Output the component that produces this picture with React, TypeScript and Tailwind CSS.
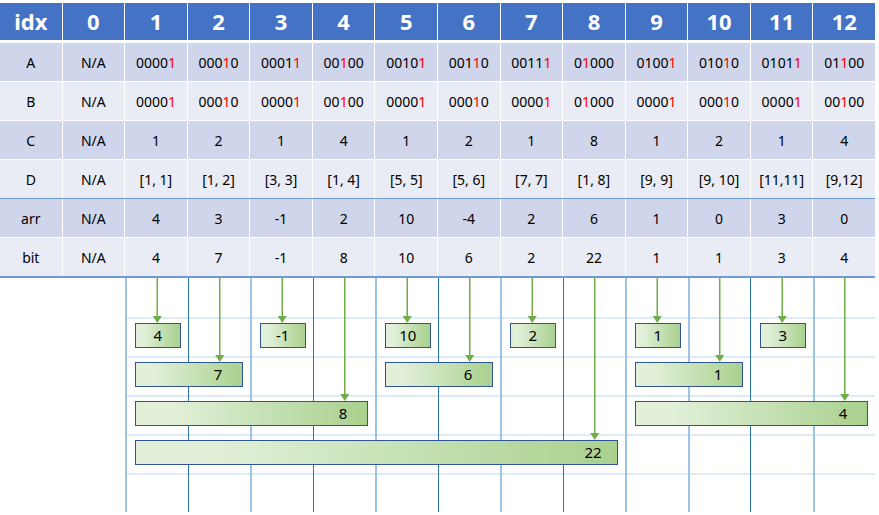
const cols = [1, 2, 3, 4, 5, 6, 7, 8, 9, 10, 11, 12];
const lowbit = (n: number) => n & -n;

const dRow = ['[1, 1]', '[1, 2]', '[3, 3]', '[1, 4]', '[5, 5]', '[5, 6]', '[7, 7]', '[1, 8]', '[9, 9]', '[9, 10]', '[11,11]', '[9,12]'];
const arr = [4, 3, -1, 2, 10, -4, 2, 6, 1, 0, 3, 0];
const bit = [4, 7, -1, 8, 10, 6, 2, 22, 1, 1, 3, 4];

// gridline columns below the table (one per data column), light or dark left border
const lineCols = [
  { pos: 'col-start-3', line: 'border-l-2 border-[#9dc3e6]' },
  { pos: 'col-start-4', line: 'border-l border-[#2e75b6]' },
  { pos: 'col-start-5', line: 'border-l-2 border-[#9dc3e6]' },
  { pos: 'col-start-6', line: 'border-l border-[#2e75b6]' },
  { pos: 'col-start-7', line: 'border-l-2 border-[#9dc3e6]' },
  { pos: 'col-start-8', line: 'border-l border-[#2e75b6]' },
  { pos: 'col-start-9', line: 'border-l-2 border-[#9dc3e6]' },
  { pos: 'col-start-10', line: 'border-l border-[#2e75b6]' },
  { pos: 'col-start-11', line: 'border-l-2 border-[#9dc3e6]' },
  { pos: 'col-start-12', line: 'border-l-2 border-[#9dc3e6]' },
  { pos: 'col-start-13', line: 'border-l border-[#2e75b6]' },
  { pos: 'col-start-14', line: 'border-l-2 border-[#9dc3e6]' },
];

const boxes = [
  { v: 4, pos: 'col-start-3 col-end-4 row-start-2' },
  { v: -1, pos: 'col-start-5 col-end-6 row-start-2' },
  { v: 10, pos: 'col-start-7 col-end-8 row-start-2' },
  { v: 2, pos: 'col-start-9 col-end-10 row-start-2' },
  { v: 1, pos: 'col-start-11 col-end-12 row-start-2' },
  { v: 3, pos: 'col-start-13 col-end-14 row-start-2' },
  { v: 7, pos: 'col-start-3 col-end-5 row-start-3' },
  { v: 6, pos: 'col-start-7 col-end-9 row-start-3' },
  { v: 1, pos: 'col-start-11 col-end-13 row-start-3' },
  { v: 8, pos: 'col-start-3 col-end-7 row-start-4' },
  { v: 4, pos: 'col-start-11 col-end-15 row-start-4' },
  { v: 22, pos: 'col-start-3 col-end-11 row-start-5' },
];

const rowLevel: Record<number, number> = { 1: 1, 2: 2, 4: 3, 8: 4 };

const Bin = ({ value, mark }: { value: number; mark: number }) => {
  const s = value.toString(2).padStart(5, '0');
  const redAt = 4 - Math.log2(mark);
  return (
    <span>
      {s.split('').map((ch, i) => (
        <span key={i} className={i === redAt ? 'text-[#ff0000]' : ''}>
          {ch}
        </span>
      ))}
    </span>
  );
};

const Row = ({ label, cells, bg }: { label: string; cells: React.ReactNode[]; bg: string }) => (
  <div className="grid grid-cols-14 gap-x-px h-[38px]">
    <div className={`${bg} flex items-center justify-center`}>{label}</div>
    <div className={`${bg} flex items-center justify-center`}>N/A</div>
    {cells.map((c, i) => (
      <div key={i} className={`${bg} flex items-center justify-center`}>
        {c}
      </div>
    ))}
  </div>
);

const App = () => {
  return (
    <div className="w-[879px] h-[515px] bg-white pt-[3px] overflow-hidden font-['Noto_Sans',sans-serif] text-[14px] text-black">
      <div className="w-[875px]">
        {/* header */}
        <div className="grid grid-cols-14 gap-x-px h-[37px]">
          {['idx', '0', ...cols.map(String)].map((h) => (
            <div key={h} className="bg-[#4472c4] text-white font-bold text-[22px] flex items-center justify-center">
              {h}
            </div>
          ))}
        </div>

        <div className="mt-[3px] flex flex-col gap-y-px">
          <Row label="A" bg="bg-[#cfd5ea]" cells={cols.map((k) => <Bin key={k} value={k} mark={lowbit(k)} />)} />
          <Row label="B" bg="bg-[#e9ebf5]" cells={cols.map((k) => <Bin key={k} value={lowbit(k)} mark={lowbit(k)} />)} />
          <Row label="C" bg="bg-[#cfd5ea]" cells={cols.map((k) => lowbit(k))} />
          <Row label="D" bg="bg-[#e9ebf5]" cells={dRow} />
        </div>
        <div className="h-px bg-[#6f9ad6]" />
        <div className="flex flex-col gap-y-px">
          <Row label="arr" bg="bg-[#cfd5ea]" cells={arr} />
          <Row label="bit" bg="bg-[#e9ebf5]" cells={bit} />
        </div>
        <div className="h-[2px] bg-[#6f9ad6]" />

        {/* tree of ranges */}
        <div className="relative grid grid-cols-14 grid-rows-[repeat(6,39px)]">
          {lineCols.map((c) => (
            <div key={c.pos} className={`${c.pos} row-start-1 row-end-7 flex flex-col ${c.line}`}>
              {[0, 1, 2, 3, 4, 5].map((r) => (
                <div key={r} className={`h-[39px] ${r > 0 ? 'border-t-2 border-[#deebf7]' : ''}`} />
              ))}
            </div>
          ))}

          {boxes.map((b) => (
            <div
              key={b.pos}
              className={`${b.pos} ml-[10px] mr-[7px] mt-[6px] h-[25px] border border-[#2f5597] bg-linear-to-r from-[#e2f0d9] from-15% to-[#a9d18e] flex items-center justify-end text-[15px]`}
            >
              <span className="w-[48px] text-center">{b.v}</span>
            </div>
          ))}

          <svg className="absolute inset-0 pointer-events-none" width="875" height="234">
            {cols.map((k) => {
              const x = 62.5 * (k + 1.5) + 1;
              const tip = 39 * rowLevel[lowbit(k)] + 6;
              return (
                <g key={k}>
                  <line x1={x} y1={0} x2={x} y2={tip - 6} stroke="#70ad47" strokeWidth="1.5" />
                  <polygon points={`${x - 4.5},${tip - 7} ${x + 4.5},${tip - 7} ${x},${tip}`} fill="#70ad47" />
                </g>
              );
            })}
          </svg>
        </div>
      </div>
    </div>
  );
};

export default App;
